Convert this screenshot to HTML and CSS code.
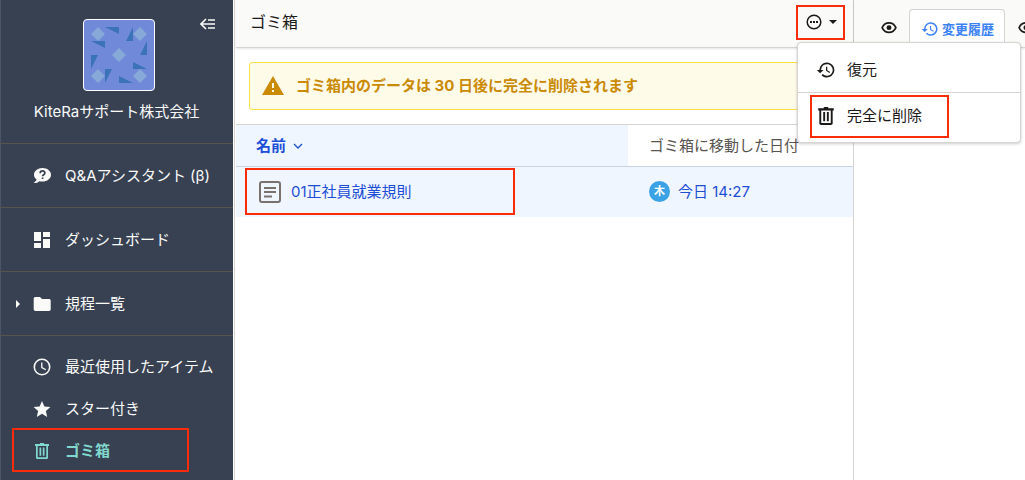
FILE: index.html
```html
<!DOCTYPE html>
<html lang="ja">
<head>
<meta charset="utf-8">
<meta name="viewport" content="width=device-width, initial-scale=1">
<title>ゴミ箱</title>
<link rel="stylesheet" href="styles.css">
</head>
<body>
<!-- 共通アイコン -->
<svg class="defs" width="0" height="0" aria-hidden="true">
    <symbol id="icon-trash" viewBox="0 0 18 18">
        <path d="M7 1v1H2v2h1v11.500C3 16.500 3.700 17 4.500 17h9c.8 0 1.500-.5 1.500-1.500V4h1V2h-5V1H7zM4.700 4h8.600v11.300H4.700V4zM6.500 5.500v8.300h1.700V5.500H6.500zm3.300 0v8.300h1.700V5.500H9.800z"/>
    </symbol>
    <symbol id="icon-history" viewBox="0 0 24 24">
        <path d="M13 3a9 9 0 0 0-9 9H1l3.890 3.890.070.140L9 12H6a7 7 0 1 1 2.060 4.940l-1.420 1.420A9 9 0 1 0 13 3zm-1 5v5l4.280 2.540.720-1.210-3.500-2.080V8H12z"/>
    </symbol>
    <symbol id="icon-eye" viewBox="0 0 24 24">
        <path d="M12 5.200c4 0 7.500 2.600 9.200 6.300-1.700 3.700-5.200 6.300-9.200 6.300s-7.500-2.600-9.200-6.300C4.500 7.800 8 5.200 12 5.200z" fill="none" stroke="currentColor" stroke-width="2.200"/>
        <circle cx="12" cy="11.500" r="3.300"/>
    </symbol>
</svg>

<div class="layout">
    <nav class="sidebar">
        <div class="profile">
            <button class="collapse" type="button" aria-label="メニューを閉じる">
                <svg width="16" height="12" viewBox="0 0 16 12"><path d="M6 1 1 6l5 5M1 6h14M8 2h7M8 10h7" fill="none" stroke="currentColor" stroke-width="1.600"/></svg>
            </button>
            <div class="avatar">
                <svg viewBox="0 0 56 56" width="56" height="56">
                    <path fill="#3b73b9" d="M14 0h14v7zM42 0v14h-7zM0 14h14v7zM56 14v14h-7zM0 28h7L0 42zM42 35l14 7H42zM14 42h7l-7 14zM28 49l14 7H28z"/>
                    <path fill="#86a9d8" d="M7 0l7 7-7 7-7-7zM49 0l7 7-7 7-7-7zM28 21l7 7-7 7-7-7zM7 42l7 7-7 7-7-7zM49 42l7 7-7 7-7-7z"/>
                </svg>
            </div>
            <div class="company">KiteRaサポート株式会社</div>
        </div>
        <ul class="nav">
            <li>
                <a href="#">
                    <svg class="icon" viewBox="0 0 18 18"><path d="M9.500 1C4.800 1 1 4 1 7.700c0 2 1 3.600 2.600 4.900C3.400 14 2 15 .5 16c2.300.2 4.300-.4 5.900-1.800 1 .3 2 .4 3.100.4 4.700 0 8.500-3.100 8.500-6.900S14.200 1 9.500 1z"/><path d="M7.200 6.200c0-3 4.700-2.900 4.700-.2 0 1.800-2.300 1.700-2.300 3.200M9.600 10.500v1.600" fill="none" stroke="#374151" stroke-width="1.700"/></svg>
                    <span>Q&amp;Aアシスタント (β)</span>
                </a>
            </li>
            <li>
                <a href="#">
                    <svg class="icon" viewBox="0 0 18 18"><path d="M1 1h7v9H1zM1 12h7v5H1zM10 1h7v5h-7zM10 8h7v9h-7z"/></svg>
                    <span>ダッシュボード</span>
                </a>
            </li>
            <li>
                <a href="#">
                    <i class="arrow"></i>
                    <svg class="icon" viewBox="0 0 18 18"><path d="M2.500 2H7l2 2h7c1 0 1.700.7 1.700 1.700v8.600c0 1-.7 1.700-1.700 1.700H2.500C1.500 16 .7 15.300.7 14.300V3.700C.7 2.700 1.500 2 2.500 2z"/></svg>
                    <span>規程一覧</span>
                </a>
            </li>
        </ul>
        <ul class="nav nav-small">
            <li>
                <a href="#">
                    <svg class="icon" viewBox="0 0 18 18"><circle cx="9" cy="9" r="7.700" fill="none" stroke="currentColor" stroke-width="1.600"/><path d="M8.800 4.500v5l4 2.200" fill="none" stroke="currentColor" stroke-width="1.300"/></svg>
                    <span>最近使用したアイテム</span>
                </a>
            </li>
            <li>
                <a href="#">
                    <svg class="icon" viewBox="0 0 18 18"><path d="M9 1l2.400 5.500 6 .5-4.500 4 1.300 5.900L9 13.800l-5.200 3.100L5.100 11 .6 7l6-.5z"/></svg>
                    <span>スター付き</span>
                </a>
            </li>
            <li>
                <a class="active" href="#">
                    <svg class="icon"><use href="#icon-trash"/></svg>
                    <span>ゴミ箱</span>
                </a>
                <div class="mark mark-nav"></div>
            </li>
        </ul>
    </nav>

    <main class="content">
        <header class="header">
            <h1>ゴミ箱</h1>
            <div class="actions">
                <button class="more" type="button" aria-label="操作メニュー">
                    <svg width="16" height="16" viewBox="0 0 16 16"><circle cx="8" cy="8" r="6.800" fill="none" stroke="currentColor" stroke-width="1.500"/><path d="M4 7h2v2H4zM7 7h2v2H7zM10 7h2v2h-2z"/></svg>
                    <i class="caret"></i>
                </button>
                <div class="mark mark-more"></div>
                <ul class="menu">
                    <li>
                        <button type="button">
                            <svg width="20" height="20"><use href="#icon-history"/></svg>
                            <span>復元</span>
                        </button>
                    </li>
                    <li>
                        <button type="button">
                            <svg width="20" height="20"><use href="#icon-trash"/></svg>
                            <span>完全に削除</span>
                        </button>
                        <div class="mark mark-delete"></div>
                    </li>
                </ul>
            </div>
        </header>

        <div class="alert">
            <svg width="24" height="24" viewBox="0 0 24 24"><path d="M1 21h22L12 2 1 21zm12-3h-2v-2h2v2zm0-4h-2v-5h2v5z"/></svg>
            <span>ゴミ箱内のデータは 30 日後に完全に削除されます</span>
        </div>

        <table class="list">
            <thead>
                <tr>
                    <th class="col-name">
                        <button class="sort" type="button">名前
                            <svg width="10" height="6" viewBox="0 0 10 6"><path d="M1 1l4 4 4-4" fill="none" stroke="currentColor" stroke-width="1.300"/></svg>
                        </button>
                    </th>
                    <th>ゴミ箱に移動した日付</th>
                </tr>
            </thead>
            <tbody>
                <tr>
                    <td>
                        <div class="mark mark-row"></div>
                        <a class="file" href="#">
                            <svg width="22" height="22" viewBox="0 0 22 22"><g fill="none" stroke="#78716c" stroke-width="2"><rect x="1" y="1" width="20" height="20" rx="2"/><path d="M5 7h12M5 11h12M5 15.500h8"/></g></svg>
                            <span>01正社員就業規則</span>
                        </a>
                    </td>
                    <td>
                        <div class="date"><span class="user">木</span><span>今日 14:27</span></div>
                    </td>
                </tr>
            </tbody>
        </table>
    </main>

    <aside class="side">
        <div class="tabs">
            <button class="tab" type="button" aria-label="プレビュー"><svg width="18" height="18"><use href="#icon-eye"/></svg></button>
            <button class="tab tab-on" type="button"><svg width="18" height="18"><use href="#icon-history"/></svg>変更履歴</button>
            <button class="tab" type="button" aria-label="表示"><svg width="18" height="18"><use href="#icon-eye"/></svg></button>
        </div>
    </aside>
</div>
</body>
</html>
```
FILE: styles.css
```css
* {
    box-sizing: border-box;
}
body {
    margin: 0;
    font-family: Inter, "Noto Sans CJK JP", sans-serif;
    font-size: 15px;
    line-height: 24px;
    color: #1c1917;
    background: #fff;
}
ul {
    margin: 0;
    padding: 0;
    list-style: none;
}
a {
    color: inherit;
    text-decoration: none;
}
button {
    padding: 0;
    border: 0;
    background: none;
    color: inherit;
    font: inherit;
}
svg {
    flex: none;
    fill: currentColor;
}
.defs {
    position: absolute;
}

.layout {
    display: grid;
    grid-template-columns: 236px minmax(0, 47fr) minmax(0, 13fr);
    min-height: 100vh;
    overflow: hidden;
}

/* sidebar */
.sidebar {
    margin-right: 1px;
    border-right: 1px solid #d6d3d1;
    box-shadow: inset -1px 0 #fff, inset 1px 0 #4b5565;
    background: #374151;
    color: #fafaf9;
}
.profile {
    position: relative;
    height: 143px;
    padding-top: 19px;
    margin-right: 1px;
    text-align: center;
}
.collapse {
    position: absolute;
    top: 18px;
    right: 17px;
    display: flex;
}
.avatar {
    display: flex;
    align-items: center;
    justify-content: center;
    width: 72px;
    height: 72px;
    margin-left: 83px;
    border: 1px solid #fff;
    border-radius: 4px;
    background: #7189d9;
}
.company {
    margin-top: 9px;
}
.nav li {
    position: relative;
    height: 64px;
    margin-right: 1px;
    border-top: 1px solid #57534e;
}
.nav a {
    position: relative;
    display: flex;
    align-items: center;
    height: 100%;
    padding-left: 33px;
    white-space: nowrap;
}
.icon {
    width: 18px;
    height: 18px;
    margin-right: 14px;
}
.arrow {
    position: absolute;
    left: 16px;
    border: 4px solid transparent;
    border-left-color: #fafaf9;
    border-right: 0;
}
.nav-small {
    margin-right: 1px;
    padding: 10px 0;
    border-top: 1px solid #57534e;
}
.nav-small li {
    height: 42px;
    margin: 0;
    border: 0;
}
.nav .active {
    font-weight: bold;
    color: #81d8cf;
}

/* main */
.content {
    min-width: 0;
    border-right: 1px solid #d6d3d1;
}
.header {
    display: flex;
    align-items: center;
    justify-content: space-between;
    height: 48px;
    padding: 0 8px 3px 14px;
    border-bottom: 1px solid #d6d3d1;
    box-shadow: 0 1px 2px rgba(0, 0, 0, .1);
    background: #fafaf9;
}
.header h1 {
    margin: 0;
    font-size: 16px;
    font-weight: normal;
}
.actions {
    position: relative;
    width: 48px;
    height: 34px;
}
.more {
    display: flex;
    align-items: center;
    justify-content: center;
    gap: 7px;
    width: 100%;
    height: 100%;
}
.caret {
    border: 4px solid transparent;
    border-top-color: #1c1917;
    border-bottom: 0;
}
.menu {
    position: absolute;
    z-index: 2;
    top: 37px;
    left: 0;
    width: 224px;
    padding: 4px 0;
    border: 1px solid #d6d3d1;
    border-radius: 4px;
    box-shadow: 0 1px 3px rgba(0, 0, 0, .2);
    background: #fff;
}
.menu li {
    position: relative;
}
.menu li + li {
    border-top: 1px solid #d6d3d1;
}
.menu button {
    display: flex;
    align-items: center;
    gap: 11px;
    width: 100%;
    height: 45px;
    padding-left: 18px;
}
.alert {
    display: flex;
    align-items: center;
    gap: 11px;
    height: 48px;
    margin: 14px 13px;
    padding-left: 11px;
    border: 1px solid #fde047;
    border-radius: 3px;
    background: #fefbe8;
    font-weight: bold;
    color: #ca8a04;
    white-space: nowrap;
}

.list {
    width: 100%;
    border-collapse: collapse;
    table-layout: fixed;
    white-space: nowrap;
}
.list th {
    height: 42px;
    padding: 0 0 0 21px;
    border-top: 1px solid #d6d3d1;
    border-bottom: 1px solid #cbd5e1;
    text-align: left;
    font-weight: normal;
    color: #57534e;
}
.list .col-name {
    width: 392px;
    padding-left: 20px;
    background: #eff6ff;
}
.sort {
    display: flex;
    align-items: center;
    gap: 7px;
    font-weight: bold;
    color: #1d4ed8;
}
.list td {
    position: relative;
    height: 50px;
    padding: 0 0 0 21px;
    background: #eff6ff;
    color: #1d4ed8;
}
.file,
.date {
    display: flex;
    align-items: center;
    gap: 8px;
}
.file {
    gap: 10px;
    margin-left: 2px;
}
.user {
    width: 21px;
    height: 21px;
    border-radius: 50%;
    background: #3ba2e6;
    color: #fff;
    font-size: 11px;
    font-weight: bold;
    line-height: 21px;
    text-align: center;
}

/* right pane */
.tabs {
    display: flex;
    align-items: flex-end;
    height: 48px;
    border-bottom: 1px solid #d6d3d1;
    box-shadow: 0 1px 2px rgba(0, 0, 0, .1);
    background: #fafaf9;
}
.tab {
    display: flex;
    flex: none;
    align-items: center;
    justify-content: center;
    gap: 3px;
    height: 38px;
    padding: 0 11px 0 26px;
    font-size: 13px;
}
.tab:last-child {
    padding-left: 12px;
}
.tab-on {
    padding: 0 10px 0 11px;
    border: 1px solid #d6d3d1;
    border-bottom: 0;
    border-radius: 4px 4px 0 0;
    background: #fff;
    font-weight: bold;
    color: #3b82f6;
}

/* red frames */
.mark {
    position: absolute;
    z-index: 3;
    border: 2px solid #f92d0a;
    pointer-events: none;
}
.mark-nav {
    top: -2px;
    left: 12px;
    width: 177px;
    height: 44px;
}
.mark-more {
    top: 0;
    left: -1px;
    width: 49px;
    height: 35px;
}
.mark-delete {
    top: 2px;
    left: 12px;
    width: 139px;
    height: 43px;
}
.mark-row {
    top: 1px;
    left: 9px;
    width: 270px;
    height: 47px;
}
```
